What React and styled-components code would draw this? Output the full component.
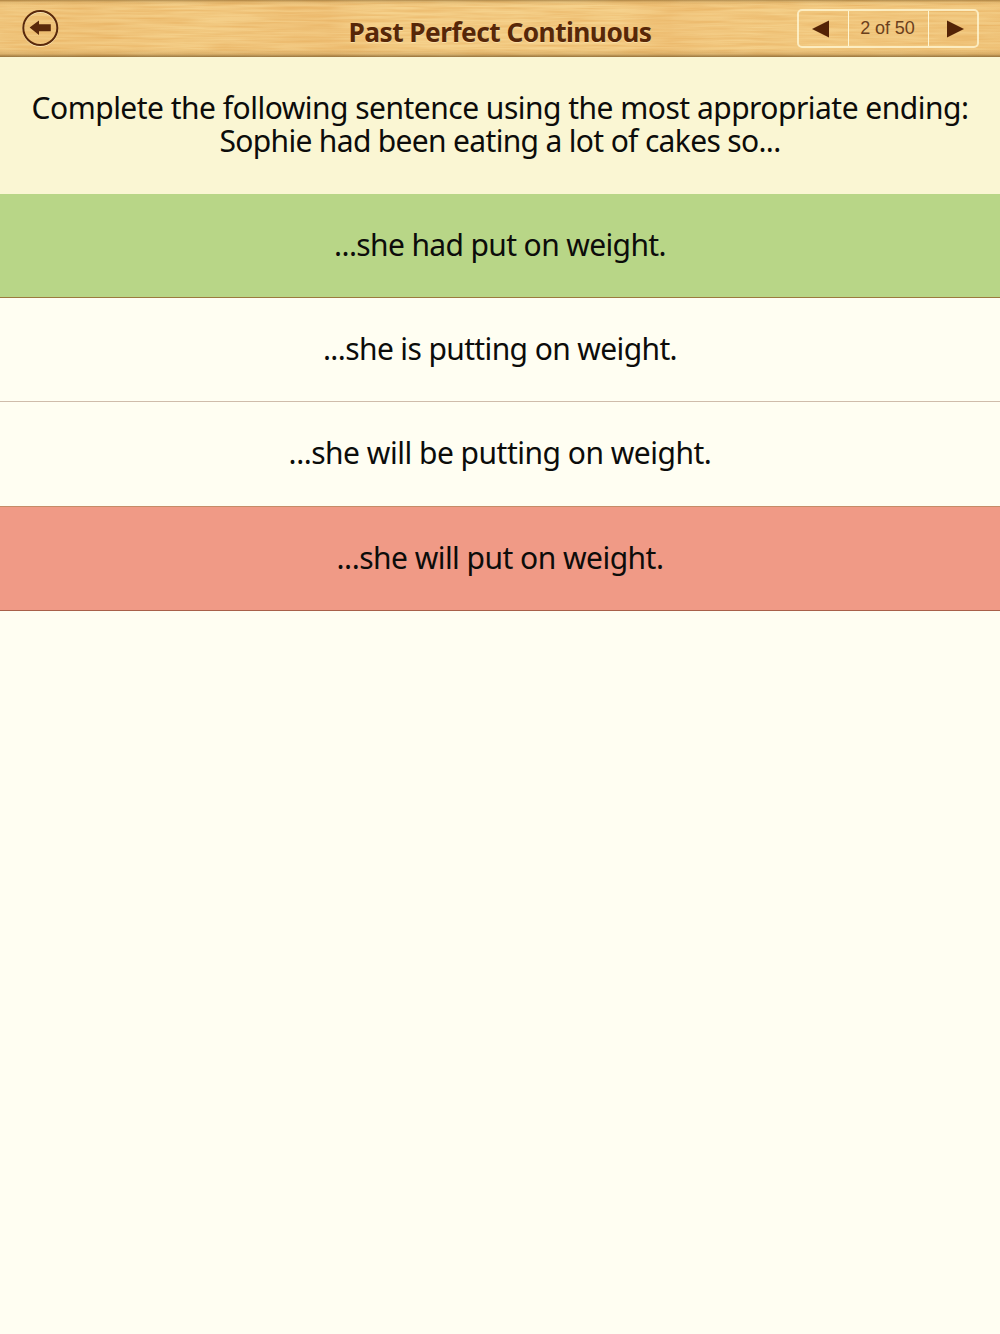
import React from "react";
import styled, { createGlobalStyle } from "styled-components";

const GlobalStyle = createGlobalStyle`
  * {
    margin: 0;
    padding: 0;
    box-sizing: border-box;
  }
  body {
    background: #fffef2;
  }
`;

const Screen = styled.div`
  display: flex;
  flex-direction: column;
  min-height: 100vh;
  background: #fffef2;
  font-family: "Noto Sans", "Open Sans", sans-serif;
  color: #0c0c0a;
`;

const Bar = styled.header`
  position: relative;
  display: grid;
  grid-template-columns: 1fr auto 1fr;
  align-items: center;
  height: 57px;
  padding: 0 21px 0 22px;
  background: linear-gradient(
      to right,
      rgba(232, 168, 84, 0) 0%,
      rgba(232, 168, 84, 0.1) 8%,
      rgba(255, 226, 160, 0.2) 20%,
      rgba(232, 160, 80, 0.12) 33%,
      rgba(255, 226, 160, 0.25) 38%,
      rgba(255, 226, 160, 0.25) 62%,
      rgba(232, 160, 80, 0.12) 67%,
      rgba(255, 226, 160, 0.2) 75%,
      rgba(232, 168, 84, 0.05) 100%
    ),
    #f2cb84;
  > * {
    position: relative;
  }
`;

const Grain = styled.svg`
  && {
    position: absolute;
    inset: 0;
    width: 100%;
    height: 100%;
  }
`;

const Edges = styled.div`
  && {
    position: absolute;
    inset: 0;
    background: linear-gradient(
      to bottom,
      rgba(110, 76, 24, 0.5) 0,
      rgba(130, 90, 30, 0.15) 2px,
      rgba(130, 90, 30, 0) 5px,
      rgba(130, 90, 30, 0) 49px,
      rgba(130, 90, 30, 0.2) 54px,
      rgba(90, 62, 20, 0.6) 57px
    );
  }
`;

const BackButton = styled.button`
  display: block;
  width: 37px;
  height: 37px;
  border: none;
  background: transparent;
  svg {
    display: block;
  }
`;

const Title = styled.h1`
  padding: 7px 1px 0 0;
  font-size: 26.3px;
  line-height: 36px;
  font-weight: 700;
  letter-spacing: -0.55px;
  white-space: nowrap;
  color: #572708;
  text-shadow: 0 1px 0 rgba(255, 236, 190, 0.6);
`;

const Pager = styled.div`
  justify-self: end;
  display: flex;
  width: 182px;
  height: 39px;
  border: 2px solid rgba(255, 246, 210, 0.8);
  border-radius: 5px;
`;

const PageButton = styled.button`
  display: flex;
  flex: 1;
  align-items: center;
  justify-content: center;
  padding-${(props) => props.$shift}: 5px;
  border: none;
  background: transparent;
`;

const PageCount = styled.span`
  display: flex;
  align-items: center;
  justify-content: center;
  width: 81px;
  padding-right: 1px;
  border: 1px solid #fff6d2;
  border-width: 0 1px;
  font-family: "Liberation Sans", Arial, sans-serif;
  font-size: 18px;
  letter-spacing: -0.1px;
  color: #6b401c;
`;

const Question = styled.section`
  height: 136.8px;
  padding-top: 34px;
  background: #faf6d3;
  text-align: center;
`;

const Line = styled.p`
  font-size: 30px;
  line-height: 33px;
  letter-spacing: ${(props) => props.$spacing};
  white-space: nowrap;
`;

const backgrounds = {
  correct: "#b8d687",
  wrong: "#f09a86",
  plain: "#fffef2",
};

const lines = {
  correct: "#9c7a3e",
  wrong: "#a8604a",
  plain: "#cfbcab",
};

const Option = styled.button`
  display: flex;
  align-items: center;
  justify-content: center;
  height: 104.25px;
  padding-bottom: 2px;
  border: none;
  border-bottom: 1px solid ${(props) => props.$line || lines[props.$state]};
  background: ${(props) => backgrounds[props.$state]};
  font-family: inherit;
  color: inherit;
`;

const options = [
  { text: "...she had put on weight.", state: "correct", spacing: "-0.63px" },
  { text: "...she is putting on weight.", state: "plain", spacing: "-0.62px" },
  {
    text: "...she will be putting on weight.",
    state: "plain",
    line: "#c58c68",
    spacing: "-0.5px",
  },
  { text: "...she will put on weight.", state: "wrong", spacing: "-0.53px" },
];

const App = () => {
  return (
    <Screen>
      <GlobalStyle />
      <Bar>
        <Grain aria-hidden="true">
          <filter
            id="wood"
            x="0"
            y="0"
            width="100%"
            height="100%"
            colorInterpolationFilters="sRGB"
          >
            <feTurbulence
              type="fractalNoise"
              baseFrequency="0.015 0.4"
              numOctaves="3"
              seed="4"
            />
            <feColorMatrix values="0 0 0 0 0.88  0 0 0 0 0.62  0 0 0 0 0.28  0.8 0 0 0 -0.25" />
          </filter>
          <rect width="100%" height="100%" filter="url(#wood)" />
        </Grain>
        <Edges />
        <BackButton aria-label="Back">
          <svg width="37" height="37" viewBox="0 0 37 37">
            <circle cx="18.3" cy="19" r="17" fill="none" stroke="#fff0c4" strokeWidth="1.6" />
            <circle cx="18.3" cy="18" r="17" fill="none" stroke="#5a290b" strokeWidth="2" />
            <path d="M7.6 17.5 17 10.5V14.2H28.8V21.2H17V25Z" fill="#5a290b" />
          </svg>
        </BackButton>
        <Title>Past Perfect Continuous</Title>
        <Pager>
          <PageButton $shift="right" aria-label="Previous">
            <svg width="17" height="18" viewBox="0 0 17 18">
              <path d="M0 9 17 0.5V17.5Z" fill="#542306" />
            </svg>
          </PageButton>
          <PageCount>2 of 50</PageCount>
          <PageButton $shift="left" aria-label="Next">
            <svg width="17" height="18" viewBox="0 0 17 18">
              <path d="M17 9 0 0.5V17.5Z" fill="#542306" />
            </svg>
          </PageButton>
        </Pager>
      </Bar>
      <Question>
        <Line $spacing="-0.515px">
          Complete the following sentence using the most appropriate ending:
        </Line>
        <Line $spacing="-0.67px">Sophie had been eating a lot of cakes so...</Line>
      </Question>
      {options.map(({ text, state, line, spacing }) => (
        <Option key={text} $state={state} $line={line}>
          <Line $spacing={spacing}>{text}</Line>
        </Option>
      ))}
    </Screen>
  );
};

export default App;
